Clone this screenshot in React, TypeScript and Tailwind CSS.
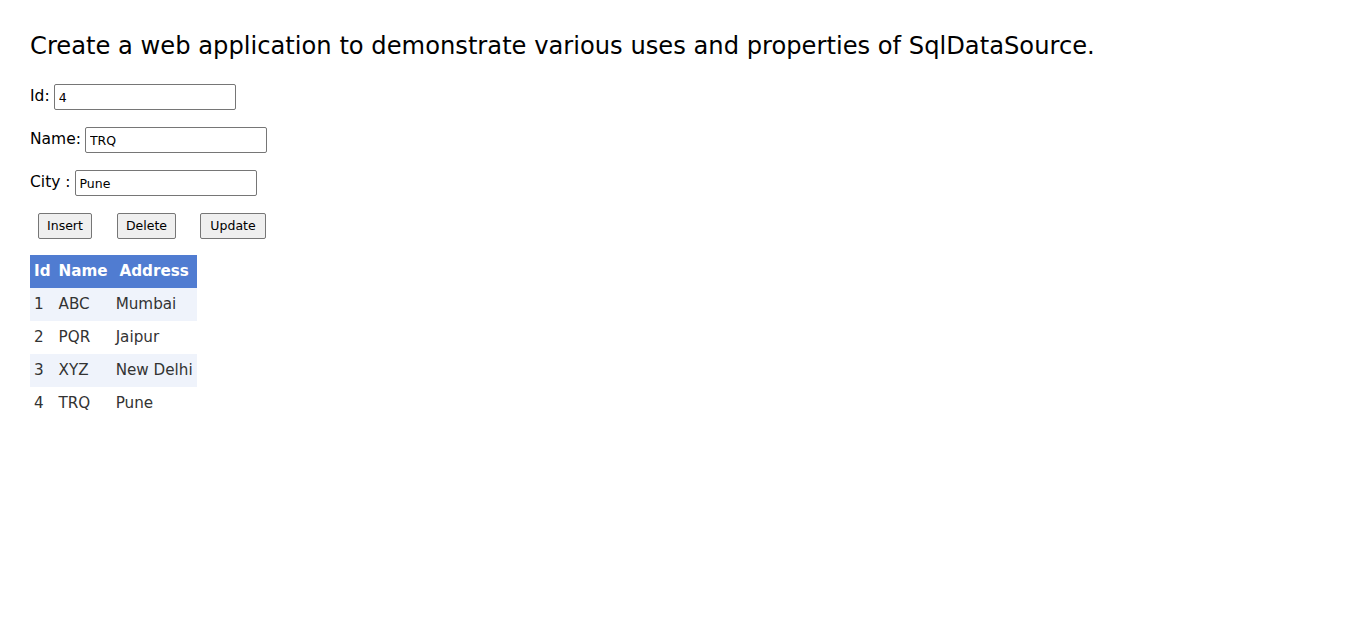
import React, { useState } from 'react';

const rows = [
  { id: 1, name: 'ABC', address: 'Mumbai' },
  { id: 2, name: 'PQR', address: 'Jaipur' },
  { id: 3, name: 'XYZ', address: 'New Delhi' },
  { id: 4, name: 'TRQ', address: 'Pune' },
];

const font = { fontFamily: '"DejaVu Sans", "Noto Sans", sans-serif' };

const Field: React.FC<{ label: string; value: string; onChange: (v: string) => void }> = ({ label, value, onChange }) => (
  <div className="flex items-center h-[26px] text-[15.5px] text-black">
    <span className="mr-[4px]">{label}</span>
    <input
      value={value}
      onChange={(e) => onChange(e.target.value)}
      className="w-[182px] h-[26px] border border-[#767676] rounded-[2px] px-[4px] text-[12.5px] text-black outline-none"
    />
  </div>
);

export default function App() {
  const [id, setId] = useState('4');
  const [name, setName] = useState('TRQ');
  const [city, setCity] = useState('Pune');

  return (
    <div className="min-h-screen bg-white pl-[30px] pt-[30px]" style={font}>
      <h1 className="text-[24.2px] leading-[32px] text-black font-normal">
        Create a web application to demonstrate various uses and properties of SqlDataSource.
      </h1>

      <div className="mt-[22px] flex flex-col gap-[17px]">
        <Field label="Id:" value={id} onChange={setId} />
        <Field label="Name:" value={name} onChange={setName} />
        <Field label="City :" value={city} onChange={setCity} />
      </div>

      {/* buttons */}
      <div className="mt-[17px] flex items-center h-[26px] pl-[8px]">
        <button className="h-[26px] w-[54px] border border-[#767676] rounded-[2px] bg-[#efefef] text-[12.5px] text-black">Insert</button>
        <button className="ml-[25px] h-[26px] w-[59px] border border-[#767676] rounded-[2px] bg-[#efefef] text-[12.5px] text-black">Delete</button>
        <button className="ml-[24px] h-[26px] w-[66px] border border-[#767676] rounded-[2px] bg-[#efefef] text-[12.5px] text-black">Update</button>
      </div>

      <table className="mt-[16px] border-collapse text-[15.2px] text-[#333333]">
        <thead>
          <tr className="h-[33px] bg-[#507cd1] text-white font-bold">
            <th className="px-[4px] text-center">Id</th>
            <th className="px-[4px] text-center">Name</th>
            <th className="px-[4px] text-center">Address</th>
          </tr>
        </thead>
        <tbody>
          {rows.map((r, i) => (
            <tr key={r.id} className={i % 2 === 0 ? 'h-[33px] bg-[#eff3fb]' : 'h-[33px] bg-white'}>
              <td className="px-[4px]">{r.id}</td>
              <td className="px-[4px]">{r.name}</td>
              <td className="px-[4px]">{r.address}</td>
            </tr>
          ))}
        </tbody>
      </table>
    </div>
  );
}
